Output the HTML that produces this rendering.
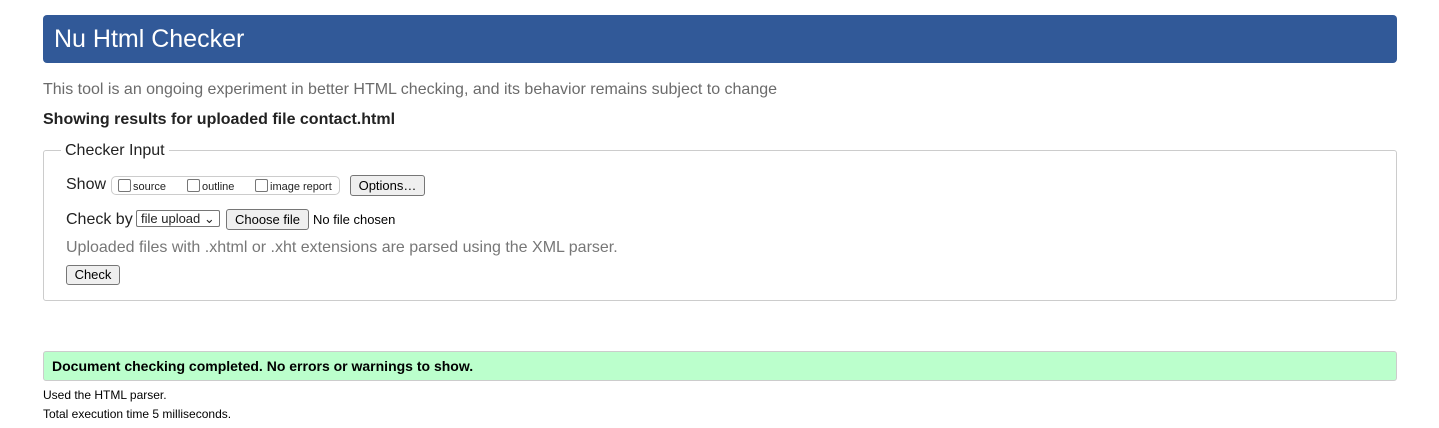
<!DOCTYPE html>
<html><head><style>
body{margin:0;width:1439px;height:428px;background:#fff;font-family:"Liberation Sans",Arial,sans-serif;position:relative;overflow:hidden;color:#222}
.a{position:absolute;white-space:nowrap}
.btn{position:absolute;border:1px solid #767676;border-radius:3px;background:#efefef;font-size:13px;color:#000;text-align:center;box-sizing:border-box}
.cb{display:inline-block;width:11px;height:11px;border:1px solid #767676;border-radius:2px;vertical-align:-2px;margin-right:2px;background:#fff}
</style></head><body>
<div class="a" style="left:43px;top:15px;width:1354px;height:48px;background:#315998;border-radius:4px"></div>
<div class="a" style="left:54px;top:25px;font-size:25px;color:#fff">Nu Html Checker</div>
<div class="a" style="left:43px;top:81px;font-size:16px;color:#6b6b6b">This tool is an ongoing experiment in better HTML checking, and its behavior remains subject to change</div>
<div class="a" style="left:43px;top:111px;font-size:16px;font-weight:bold;color:#222">Showing results for uploaded file contact.html</div>
<div class="a" style="left:43px;top:150px;width:1352px;height:149px;border:1px solid #ccc;border-radius:3px"></div>
<div class="a" style="left:61px;top:142px;font-size:16px;background:#fff;padding:0 4px;color:#222">Checker Input</div>
<div class="a" style="left:66px;top:176px;font-size:16px">Show</div>
<div class="a" style="left:111px;top:176px;width:227px;height:17px;border:1px solid #ccc;border-radius:5px"></div>
<div class="a" style="left:118px;top:179px;font-size:11px"><span class="cb"></span>source</div>
<div class="a" style="left:187px;top:179px;font-size:11px"><span class="cb"></span>outline</div>
<div class="a" style="left:255px;top:179px;font-size:11px"><span class="cb"></span>image report</div>
<div class="btn" style="left:350px;top:175px;width:75px;height:21px;line-height:19px">Options…</div>
<div class="a" style="left:66px;top:211px;font-size:16px">Check by</div>
<div class="a" style="left:136px;top:210px;height:17px;border:1px solid #767676;border-radius:2px;font-size:13px;line-height:16px;padding-left:4px;box-sizing:border-box;width:84px">file upload ⌄</div>
<div class="btn" style="left:226px;top:209px;width:83px;height:21px;line-height:19px">Choose file</div>
<div class="a" style="left:313px;top:212px;font-size:13px;color:#000">No file chosen</div>
<div class="a" style="left:66px;top:239px;font-size:16px;color:#777">Uploaded files with .xhtml or .xht extensions are parsed using the XML parser.</div>
<div class="btn" style="left:66px;top:265px;width:54px;height:20px;line-height:18px">Check</div>
<div class="a" style="left:43px;top:351px;width:1352px;height:28px;background:#bbffcc;border:1px solid #ccc;border-radius:3px"></div>
<div class="a" style="left:52px;top:358px;font-size:14px;font-weight:bold;color:#000">Document checking completed. No errors or warnings to show.</div>
<div class="a" style="left:43px;top:388px;font-size:12px;color:#000">Used the HTML parser.</div>
<div class="a" style="left:43px;top:407px;font-size:12px;color:#000">Total execution time 5 milliseconds.</div>
</body></html>
